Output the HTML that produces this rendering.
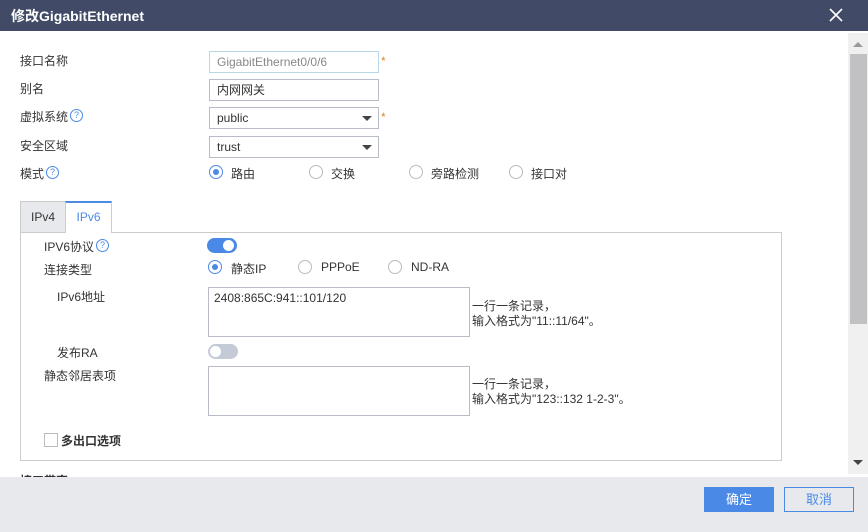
<!DOCTYPE html>
<html><head><meta charset="utf-8"><style>
*{box-sizing:border-box;margin:0;padding:0}
body{width:868px;height:532px;overflow:hidden;background:#fff;font-family:"Liberation Sans","Noto Sans CJK SC",sans-serif;font-size:12px;color:#333;position:relative}
.a{position:absolute}
.hdr{left:0;top:0;width:868px;height:31px;background:#414b67;color:#fff;font-weight:bold;font-size:14px;line-height:33px;padding-left:11px}
.lbl{font-size:12px;color:#333}
.inp{border:1px solid #b8bcc6;height:22px;line-height:20px;padding-left:7px;font-size:12px;color:#333;background:#fff}
.q{position:absolute;width:13px;height:13px;border:1px solid #4a8ae6;border-radius:50%;color:#4a8ae6;font-size:9px;line-height:11px;text-align:center}
.star{color:#e08a2a;font-size:12px}
.arr{position:absolute;right:6px;top:8px;width:0;height:0;border-left:5px solid transparent;border-right:5px solid transparent;border-top:5px solid #444}
.rad{width:14px;height:14px;border:1px solid #bbb;border-radius:50%;background:#fff}
.rad.on{border-color:#4a8ae6}
.rad.on::after{content:"";position:absolute;left:3px;top:3px;width:6px;height:6px;border-radius:50%;background:#4a8ae6}
.ta{border:1px solid #b8bcc6;background:#fff}
</style></head><body>
<div class="a hdr">修改GigabitEthernet</div>
<svg class="a" style="left:829px;top:8px" width="14" height="14"><path d="M1 1L13 13M13 1L1 13" stroke="#fff" stroke-width="1.6"/></svg>

<div class="a lbl" style="left:20px;top:52px">接口名称</div>
<div class="a inp" style="left:209px;top:51px;width:170px;border-color:#b9d6ea;color:#888">GigabitEthernet0/0/6</div>
<div class="a star" style="left:381px;top:54px">*</div>

<div class="a lbl" style="left:20px;top:80px">别名</div>
<div class="a inp" style="left:209px;top:79px;width:170px">内网网关</div>

<div class="a lbl" style="left:20px;top:108px">虚拟系统</div><div class="q" style="left:70px;top:109px">?</div>
<div class="a inp" style="left:209px;top:107px;width:170px">public<span class="arr"></span></div>
<div class="a star" style="left:381px;top:110px">*</div>

<div class="a lbl" style="left:20px;top:137px">安全区域</div>
<div class="a inp" style="left:209px;top:136px;width:170px">trust<span class="arr"></span></div>

<div class="a lbl" style="left:20px;top:165px">模式</div><div class="q" style="left:46px;top:166px">?</div>
<div class="a rad on" style="left:209px;top:165px"></div><div class="a lbl" style="left:231px;top:165px">路由</div>
<div class="a rad" style="left:309px;top:165px"></div><div class="a lbl" style="left:331px;top:165px">交换</div>
<div class="a rad" style="left:409px;top:165px"></div><div class="a lbl" style="left:431px;top:165px">旁路检测</div>
<div class="a rad" style="left:509px;top:165px"></div><div class="a lbl" style="left:531px;top:165px">接口对</div>

<div class="a" style="left:20px;top:201px;width:46px;height:32px;background:#e8e9ec;border:1px solid #ccc;border-bottom:none;line-height:30px;text-align:center;color:#333">IPv4</div>
<div class="a" style="left:65px;top:201px;width:47px;height:32px;background:#fff;border:1px solid #ccc;border-top:2px solid #4a8ae6;border-bottom:none;line-height:28px;text-align:center;color:#4a8ae6;z-index:2">IPv6</div>
<div class="a" style="left:20px;top:232px;width:762px;height:229px;border:1px solid #ccc"></div>

<div class="a lbl" style="left:44px;top:238px">IPV6协议</div><div class="q" style="left:96px;top:239px">?</div>
<div class="a" style="left:207px;top:238px;width:30px;height:15px;border-radius:8px;background:#4a8ae6"><div class="a" style="left:16px;top:2px;width:11px;height:11px;border-radius:50%;background:#fff"></div></div>

<div class="a lbl" style="left:44px;top:261px">连接类型</div>
<div class="a rad on" style="left:208px;top:260px"></div><div class="a lbl" style="left:231px;top:260px">静态IP</div>
<div class="a rad" style="left:298px;top:260px"></div><div class="a lbl" style="left:321px;top:260px">PPPoE</div>
<div class="a rad" style="left:388px;top:260px"></div><div class="a lbl" style="left:411px;top:260px">ND-RA</div>

<div class="a lbl" style="left:57px;top:288px">IPv6地址</div>
<div class="a ta" style="left:208px;top:287px;width:262px;height:50px;padding:3px 5px">2408:865C:941::101/120</div>
<div class="a lbl" style="left:472px;top:299px;line-height:15px">一行一条记录，<br>输入格式为"11::11/64"。</div>

<div class="a lbl" style="left:57px;top:344px">发布RA</div>
<div class="a" style="left:208px;top:344px;width:30px;height:15px;border-radius:8px;background:#c5cbd6"><div class="a" style="left:2px;top:2px;width:11px;height:11px;border-radius:50%;background:#fff"></div></div>

<div class="a lbl" style="left:44px;top:367px">静态邻居表项</div>
<div class="a ta" style="left:208px;top:366px;width:262px;height:50px"></div>
<div class="a lbl" style="left:472px;top:377px;line-height:15px">一行一条记录，<br>输入格式为"123::132 1-2-3"。</div>

<div class="a" style="left:44px;top:433px;width:14px;height:14px;border:1px solid #bbb"></div>
<div class="a" style="left:61px;top:432px;font-weight:bold;font-size:12px;color:#333">多出口选项</div>

<div class="a" style="left:20px;top:474px;font-weight:bold;font-size:12px;color:#333;height:4px;overflow:hidden;line-height:14px">接口带宽</div>

<div class="a" style="left:848px;top:33px;width:20px;height:441px;background:#f0f0f0"></div>
<div class="a" style="left:853px;top:42px;width:0;height:0;border-left:5px solid transparent;border-right:5px solid transparent;border-bottom:5px solid #999"></div>
<div class="a" style="left:850px;top:54px;width:17px;height:270px;background:#c1c1c4"></div>
<div class="a" style="left:853px;top:460px;width:0;height:0;border-left:5px solid transparent;border-right:5px solid transparent;border-top:5px solid #444"></div>

<div class="a" style="left:0;top:477px;width:868px;height:55px;background:#e8e9ed"></div>
<div class="a" style="left:704px;top:487px;width:70px;height:25px;background:#4a8ae6;color:#fff;text-align:center;line-height:25px;font-size:13px">确定</div>
<div class="a" style="left:784px;top:487px;width:70px;height:25px;border:1px solid #4a8ae6;color:#4a8ae6;text-align:center;line-height:23px;font-size:13px">取消</div>
</body></html>
